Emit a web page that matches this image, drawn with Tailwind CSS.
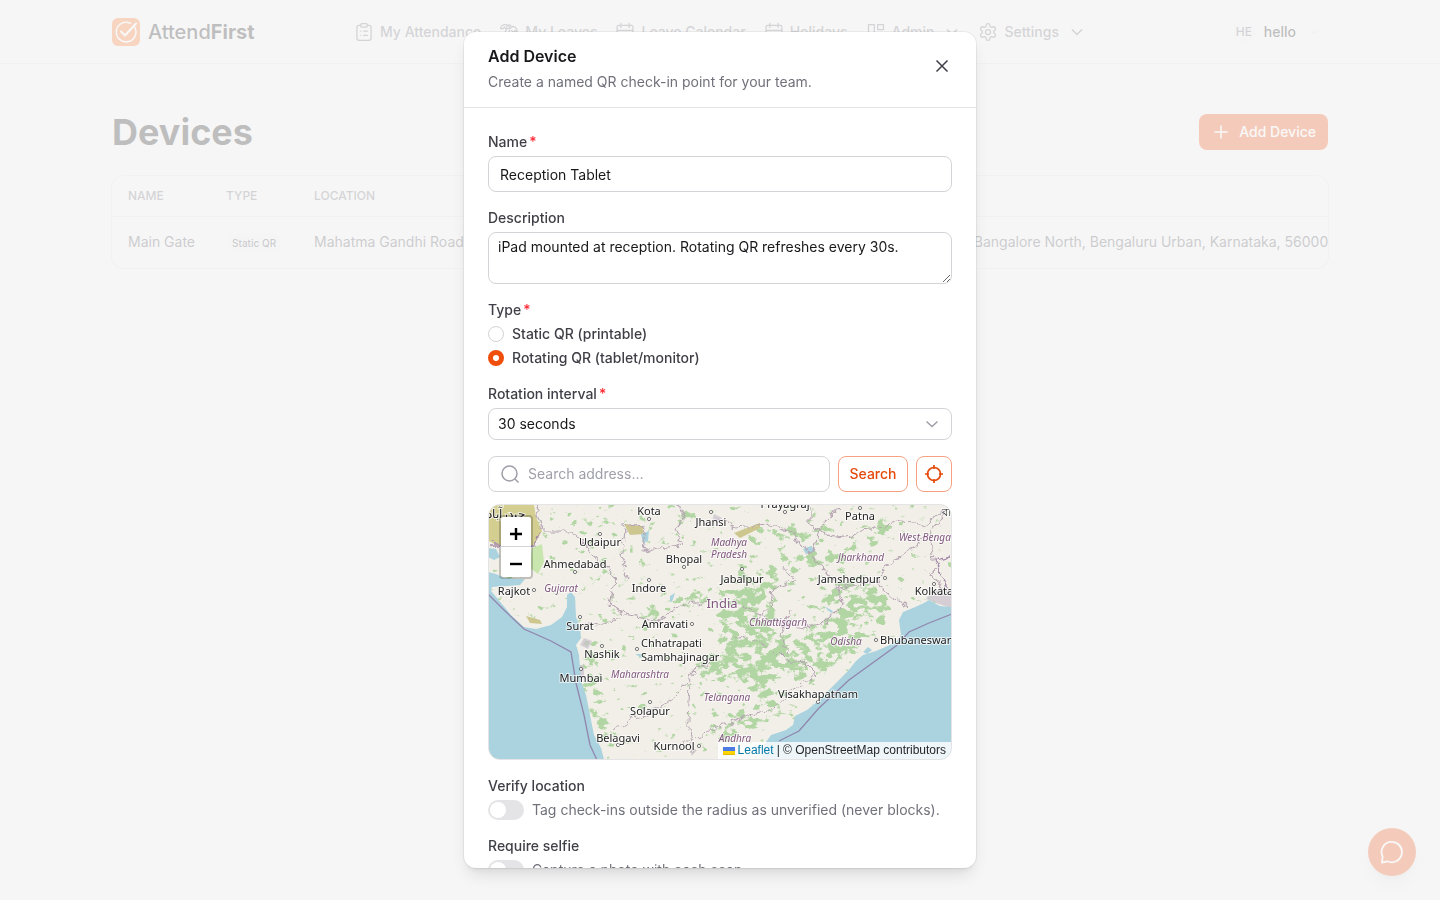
<!doctype html>
<html lang="en">
  <head>
    <meta charset="UTF-8" />
    <meta name="viewport" content="width=device-width, initial-scale=1.0" />
    <title>Devices - AttendFirst</title>
    <script src="https://cdn.jsdelivr.net/npm/@tailwindcss/browser@4"></script>
  </head>

  <body class="min-h-screen bg-[#f6f6f6] font-['Inter',sans-serif] text-sm text-zinc-900">
    <header class="h-16 border-b border-zinc-200">
      <div class="mx-auto flex h-full max-w-[1216px] items-center justify-between">
        <a href="#" class="flex w-[242px] items-center gap-2 text-xl font-medium">
          <svg class="size-7" viewBox="0 0 28 28" fill="none">
            <rect width="28" height="28" rx="6" fill="#f97326" />
            <path d="M22.6 9.2A9.8 9.8 0 1 1 18.500 5.300" stroke="#fff" stroke-width="1.500" stroke-linecap="round" />
            <path d="m9 13.500 4 4L24 5.500" stroke="#fff" stroke-width="2" stroke-linecap="round" stroke-linejoin="round" />
          </svg>
          <span>Attend<b class="font-bold">First</b></span>
        </a>
        <nav class="flex flex-1 items-center gap-4.5 font-medium whitespace-nowrap text-zinc-500">
          <a href="#" class="flex items-center gap-1.5">
            <svg class="size-5" viewBox="0 0 24 24" fill="none" stroke="currentColor" stroke-width="1.500" stroke-linecap="round" stroke-linejoin="round"><rect x="8" y="2" width="8" height="4" rx="1.500" /><path d="M16 4h2a2.500 2.500 0 0 1 2.500 2.500v13A2.500 2.500 0 0 1 18 22H6a2.500 2.500 0 0 1-2.500-2.500v-13A2.500 2.500 0 0 1 6 4h2M8 11h.1M8 16h.1M11.500 11H16M11.500 16H16" /></svg>
            My Attendance
          </a>
          <a href="#" class="flex items-center gap-1.5">
            <svg class="size-5" viewBox="0 0 24 24" fill="none" stroke="currentColor" stroke-width="1.500" stroke-linecap="round" stroke-linejoin="round"><path d="M13 8c0-2.800-2.500-5-5.500-5S2 5.200 2 8h3l1.500-2L8 8zM9 6c1-2 3-3 5-2M13 8c1.500-2.500 4-3 6-2s3 3.500 2.500 6L19 10l-1 3-3-3M9 8c-2 4-3 9-2 14h4c-1-5 0-10 2-12" /></svg>
            My Leaves
          </a>
          <a href="#" class="flex items-center gap-1.5">
            <svg class="size-5" viewBox="0 0 24 24" fill="none" stroke="currentColor" stroke-width="1.500" stroke-linecap="round" stroke-linejoin="round"><rect x="2.500" y="4" width="19" height="18" rx="2" /><path d="M7 1.500v5M17 1.500v5M2.500 10h19" /></svg>
            Leave Calendar
          </a>
          <a href="#" class="flex items-center gap-1.5">
            <svg class="size-5" viewBox="0 0 24 24" fill="none" stroke="currentColor" stroke-width="1.500" stroke-linecap="round" stroke-linejoin="round"><rect x="2.500" y="4" width="19" height="18" rx="2" /><path d="M7 1.500v5M17 1.500v5M2.500 10h19" /></svg>
            Holidays
          </a>
          <a href="#" class="flex items-center gap-1.5">
            <svg class="size-5" viewBox="0 0 24 24" fill="none" stroke="currentColor" stroke-width="1.500" stroke-linejoin="round"><path d="M3 3h7v11H3zM14 3h7v6h-7zM14 13h7v8h-7zM3 18h7v3H3z" /></svg>
            Admin
            <svg class="ml-1 size-4" viewBox="0 0 16 16" fill="none" stroke="currentColor" stroke-width="1.500"><path d="m3 5.500 5 5 5-5" /></svg>
          </a>
          <a href="#" class="flex items-center gap-1.5">
            <svg class="size-5" viewBox="0 0 24 24" fill="none" stroke="currentColor" stroke-width="1.500" stroke-linejoin="round"><path d="M12.220 2h-.44a2 2 0 0 0-2 2v.18a2 2 0 0 1-1 1.730l-.43.250a2 2 0 0 1-2 0l-.150-.08a2 2 0 0 0-2.730.73l-.220.380a2 2 0 0 0 .73 2.730l.150.1a2 2 0 0 1 1 1.720v.510a2 2 0 0 1-1 1.740l-.150.09a2 2 0 0 0-.73 2.730l.220.380a2 2 0 0 0 2.730.73l.150-.08a2 2 0 0 1 2 0l.43.250a2 2 0 0 1 1 1.730V20a2 2 0 0 0 2 2h.44a2 2 0 0 0 2-2v-.18a2 2 0 0 1 1-1.730l.43-.250a2 2 0 0 1 2 0l.150.08a2 2 0 0 0 2.730-.73l.220-.390a2 2 0 0 0-.73-2.730l-.150-.08a2 2 0 0 1-1-1.740v-.5a2 2 0 0 1 1-1.740l.150-.09a2 2 0 0 0 .73-2.730l-.220-.380a2 2 0 0 0-2.730-.73l-.150.08a2 2 0 0 1-2 0l-.43-.250a2 2 0 0 1-1-1.730V4a2 2 0 0 0-2-2z" /><circle cx="12" cy="12" r="3" /></svg>
            Settings
            <svg class="ml-1 size-4" viewBox="0 0 16 16" fill="none" stroke="currentColor" stroke-width="1.500"><path d="m3 5.500 5 5 5-5" /></svg>
          </a>
        </nav>
        <button type="button" class="flex items-center gap-2 pr-2 font-medium">
          <span class="flex size-6 items-center justify-center rounded-full bg-zinc-100 text-xs text-zinc-500">HE</span>
          hello
          <svg class="ml-1 size-3 text-zinc-300" viewBox="0 0 12 12" fill="none" stroke="currentColor"><path d="m3 4.500 3 3 3-3" /></svg>
        </button>
      </div>
    </header>

    <main class="mx-auto max-w-[1216px] pt-12">
      <div class="flex items-center justify-between">
        <h1 class="text-4xl font-bold">Devices</h1>
        <button type="button" class="flex h-9 items-center gap-2 rounded-lg bg-[#f04e0c] px-3 font-medium text-white">
          <svg class="size-5" viewBox="0 0 20 20" fill="none" stroke="currentColor" stroke-width="1.500"><path d="M10 3.500v13M3.500 10h13" /></svg>
          Add Device
        </button>
      </div>

      <div class="mt-6 overflow-hidden rounded-xl ring-1 ring-zinc-200">
        <table class="w-full table-fixed text-left whitespace-nowrap">
          <thead class="h-10 border-b border-zinc-200 text-xs text-zinc-500">
            <tr>
              <th class="w-[98px] pl-4 font-medium">NAME</th>
              <th class="w-[88px] pl-4 font-medium">TYPE</th>
              <th class="pl-4 font-medium">LOCATION</th>
            </tr>
          </thead>
          <tbody class="h-[52px] text-zinc-600">
            <tr>
              <td class="pl-4">Main Gate</td>
              <td class="pl-4"><span class="rounded-full bg-zinc-100 px-1.5 py-1 text-[10px] font-medium">Static QR</span></td>
              <td class="pl-4">Mahatma Gandhi Road, Shivaji Nagar, Ashok Nagar, Bengaluru Central City Corporation, Bengaluru, Bangalore North, Bengaluru Urban, Karnataka, 560001, India</td>
            </tr>
          </tbody>
        </table>
      </div>
    </main>

    <button type="button" aria-label="Open chat" class="fixed right-6 bottom-6 flex size-12 items-center justify-center rounded-full bg-[#f04e0c] text-white shadow-lg">
      <svg class="size-6" viewBox="0 0 24 24" fill="none" stroke="currentColor" stroke-width="1.800" stroke-linecap="round" stroke-linejoin="round"><path d="M2.600 16.500A10.200 10.200 0 1 1 7.500 21.300L2 22.500z" /></svg>
    </button>

    <!-- Backdrop and dialog -->
    <div class="fixed inset-0 flex items-center justify-center bg-[#f6f6f6]/75 py-8">
      <div role="dialog" aria-labelledby="dialogTitle" class="flex max-h-full w-full max-w-lg flex-col overflow-hidden rounded-xl bg-white shadow-lg ring-1 ring-black/5">
        <div class="flex shrink-0 items-start justify-between border-b border-zinc-200 px-6 pt-3 pb-[15px]">
          <div>
            <h2 id="dialogTitle" class="text-base font-semibold">Add Device</h2>
            <p class="mt-1 leading-5 text-zinc-500">Create a named QR check-in point for your team.</p>
          </div>
          <button type="button" aria-label="Close" class="mt-3 text-zinc-700">
            <svg class="size-5" viewBox="0 0 20 20" fill="none" stroke="currentColor" stroke-width="1.500"><path d="m4.500 4.500 11 11m0-11-11 11" /></svg>
          </button>
        </div>

        <form class="flex flex-col gap-4 overflow-y-auto p-6 [scrollbar-width:none]">
          <div class="flex shrink-0 flex-col gap-1">
            <label for="name" class="font-medium text-zinc-700">Name<span class="ml-0.5 text-red-500">*</span></label>
            <input id="name" type="text" value="Reception Tablet" class="h-9 w-full rounded-lg border border-zinc-300 px-[11px]" />
          </div>

          <div class="flex shrink-0 flex-col gap-1">
            <label for="description" class="font-medium text-zinc-700">Description</label>
            <textarea id="description" class="h-[52px] w-full resize rounded-lg border border-zinc-300 px-[9px] py-1 leading-5">iPad mounted at reception. Rotating QR refreshes every 30s.</textarea>
          </div>

          <fieldset class="flex shrink-0 flex-col gap-1 font-medium text-zinc-700">
            <legend class="mb-1">Type<span class="ml-0.5 text-red-500">*</span></legend>
            <label class="flex items-center gap-2">
              <input type="radio" name="type" class="size-4 appearance-none rounded-full border border-zinc-300 checked:border-5 checked:border-[#f04e0c]" />
              Static QR (printable)
            </label>
            <label class="flex items-center gap-2">
              <input type="radio" name="type" checked class="size-4 appearance-none rounded-full border border-zinc-300 checked:border-5 checked:border-[#f04e0c]" />
              Rotating QR (tablet/monitor)
            </label>
          </fieldset>

          <div class="flex shrink-0 flex-col gap-1">
            <label for="interval" class="font-medium text-zinc-700">Rotation interval<span class="ml-0.5 text-red-500">*</span></label>
            <div class="relative">
              <select id="interval" class="h-8 w-full appearance-none rounded-lg border border-zinc-300 px-[9px]">
                <option>30 seconds</option>
              </select>
              <svg class="pointer-events-none absolute top-2 right-3 size-4 text-zinc-400" viewBox="0 0 16 16" fill="none" stroke="currentColor" stroke-width="1.500"><path d="m2.500 5.500 5.500 5 5.500-5" /></svg>
            </div>
          </div>

          <div class="flex shrink-0 flex-col gap-3">
            <div class="flex gap-2">
              <label class="flex h-9 flex-1 items-center gap-2 rounded-lg border border-zinc-300 px-[11px]">
                <svg class="size-5 text-zinc-400" viewBox="0 0 20 20" fill="none" stroke="currentColor" stroke-width="1.500"><circle cx="9.500" cy="9.500" r="7.500" /><path d="m15 15 3.500 3.500" /></svg>
                <input type="text" aria-label="Search address" placeholder="Search address…" class="min-w-0 flex-1 outline-none placeholder:text-zinc-400" />
              </label>
              <button type="button" class="h-9 w-[70px] rounded-lg border border-[#f6a184] font-medium text-[#e54a0b]">Search</button>
              <button type="button" aria-label="Use my location" class="flex size-9 items-center justify-center rounded-lg border border-[#f6a184] text-[#e54a0b]">
                <svg class="size-5" viewBox="0 0 20 20" fill="none" stroke="currentColor" stroke-width="1.700"><circle cx="10" cy="10" r="6.500" /><path d="M10 1v4M10 15v4M1 10h4M15 10h4" /></svg>
              </button>
            </div>

            <div class="relative h-64 overflow-hidden rounded-xl border border-zinc-200 bg-[#f2efe9]">
              <svg class="h-full w-full" viewBox="1 1 462 254" preserveAspectRatio="xMidYMid slice">
                <defs>
                  <!-- Breaks a soft area up into small patches of wood -->
                  <filter id="patches" x="0" y="0" width="464" height="256" filterUnits="userSpaceOnUse" color-interpolation-filters="sRGB">
                    <feTurbulence type="fractalNoise" baseFrequency="0.1 0.14" numOctaves="5" seed="11" result="noise" />
                    <feGaussianBlur in="SourceGraphic" stdDeviation="5" result="density" />
                    <feComposite in="noise" in2="density" operator="arithmetic" k2="1" k3="1" k4="-0.76" />
                    <feColorMatrix values="0 0 0 0 0.7  0 0 0 0 0.84  0 0 0 0 0.64  0 0 0 11 0" />
                  </filter>
                  <filter id="jagged" x="0" y="0" width="464" height="256" filterUnits="userSpaceOnUse">
                    <feTurbulence type="fractalNoise" baseFrequency="0.12" numOctaves="3" seed="4" />
                    <feDisplacementMap in="SourceGraphic" scale="11" xChannelSelector="R" yChannelSelector="G" />
                  </filter>
                </defs>
                <g filter="url(#patches)">
                  <rect width="464" height="256" opacity="0.07" />
                  <path opacity="0.28" d="M232 95 270 80 290 110 285 190 300 200 278 215 262 190 230 160z" />
                  <path opacity="0.26" d="M285 140 330 120 380 125 370 150 335 170 300 180 280 165z" />
                  <path opacity="0.34" d="M290 50 350 48 362 62 300 62zM245 30 345 22 340 32 250 36z" />
                  <path opacity="0.26" d="M330 90 355 70 400 85 405 110 375 125 340 125z" />
                  <path opacity="0.2" d="M235 65 290 60 310 85 250 92z" />
                  <path opacity="0.26" d="M150 112 180 100 210 85 235 78 235 88 200 105 165 120z" />
                  <path opacity="0.26" d="M94 130 106 135 114 190 128 254 112 240 98 185z" />
                  <path opacity="0.24" d="M188 1 206 1 208 20 186 16zM90 20 120 1 125 4 100 40 130 70 120 75z" />
                  <path opacity="0.25" d="M205 160 240 150 240 180 210 175zM375 15 405 10 408 30 385 25z" />
                  <path opacity="0.24" d="M225 215 265 205 280 215 235 245zM355 35 400 25 400 35 360 45z" />
                </g>
                <path fill="#d4cf91" d="M1 1h45l2 12 6 14-8 14H8L1 37z" />
                <path fill="#c8e6ae" d="m44 44 10-4 2 18-6 12-8-6zM40 43l8 20-6 2z" />
                <path fill="#cdc78f" d="m136 20 18 2 2 8-14 1zM246 29l26-10v5l-20 10zM38 112l14 4 2 4-12-1z" />
                <path fill="#c9c2cc" d="m438 95 5-8 20-3v20l-12-4zM226 10l8 4-2 4-8-1zM96 134l8 3-4 8-8-4zM90 161h6v14l-4-4z" opacity=".7" />
                <!-- Arabian Sea and Bay of Bengal -->
                <g fill="#aad3df">
                  <path d="M0 68l8 2 8 4 13 1h8l-5 6-12 1-16 1-1 4 6 7 14 17 13 12 12 2 15-4 11-8 5-10V91l4-3 4 5 1 20 4 10 1 11-5 7 3 10 1 13 1 13 5 14 4 20 4 20 7 13 4 15H0z" />
                  <path d="M464 103l-12-1-11-6-5 3-11 5-10 4-4 8 1 8 1 6-3 6-8 5-14 6-13 4-7 6-8 10-10 10-10 10-10 10-11 9-12 6-2 9-7 5-15 5-5 7-6 18h193z" />
                  <path d="m0 44 8 1 4 8-6 3-6-3zM153 30l8-3-1 10-5 2zM315 45l8-3 4 5-9 3zM375 148l5-5 4 3-5 4zM147 150h7v4zM336 102l9 5-2 2zM182 92l5-3-3 9-2-1z" />
                </g>
                <!-- State borders -->
                <g filter="url(#jagged)" fill="none" stroke="#b6a6b3">
                  <path d="M48 1l7 26h29l14 13 15 21 15 12-6 28 12 8 38 8 15-14 32-6M141 76l-8-24 5-24-4-8 16-2 7 10-2 20 15-4 23-3-4-18 8-10-10-16" stroke-width="1.200" />
                  <path d="M228 14l20 9 32-3 26 8 6 14 12 7 8-27 20-19M322 1v20l25 12 18-2 24-8 20-6 26 5 20-14 8-12M324 54l26 28 5 18-20 20-20 4-30-6-30-16M350 84l38-6 16 14 15 10M436 34l-22 18-14 8-10 18M457 10l-15 20 5 32-4 8 14 16" stroke-width="1.200" />
                  <path d="M295 62l12 14-22 8-2 16-18 20M285 144l12 12 20 2 12 12-25 18-23 18-30 9-30 12-28 15M302 106l-8 26 6 18M126 226l18-12 18-6 22-12 15-18 10-16 14-4M202 180l-2 36 4 34M92 120l20 2 20-8M242 135l14-2 24 10" />
                </g>
                <path filter="url(#jagged)" d="M462 52l-14 4 8 22 6 12M1 41h44l6-10" fill="none" stroke="#a78bab" stroke-width="1.500" />
                <path d="M0 90l16 16 20 19 27 12 20 11 5 31 8 32 6 30 7 15M464 110l-23 9-20 9-13 14-47 34-30 28-20 23-20 10" fill="none" stroke="#9186ad" stroke-width="1.300" />
                <g fill="#fff" stroke="#555" stroke-width=".8">
                  <circle cx="161" cy="15" r="1.600" /><circle cx="112" cy="30" r="1.600" /><circle cx="223" cy="8" r="1.600" /><circle cx="87" cy="68" r="1.600" />
                  <circle cx="196" cy="63" r="1.600" /><circle cx="161" cy="76" r="1.600" /><circle cx="46" cy="86" r="1.600" /><circle cx="92" cy="113" r="1.600" />
                  <circle cx="204" cy="120" r="1.600" /><circle cx="297" cy="8" r="1.600" /><circle cx="372" cy="4" r="1.600" /><circle cx="254" cy="65" r="1.600" />
                  <circle cx="397" cy="74" r="1.600" /><circle cx="446" cy="80" r="1.600" /><circle cx="114" cy="142" r="1.600" /><circle cx="149" cy="145" r="1.600" />
                  <circle cx="93" cy="165" r="1.600" /><circle cx="162" cy="198" r="1.600" /><circle cx="130" cy="241" r="1.600" /><circle cx="211" cy="242" r="1.600" />
                  <circle cx="388" cy="136" r="1.600" /><circle cx="330" cy="198" r="1.600" />
                </g>
                <g class="fill-[#222] stroke-white/70 stroke-2 font-['Noto_Sans',sans-serif] text-[11px]" paint-order="stroke" text-anchor="middle">
                  <text x="18" y="14" class="text-[12px]">حيدرآباد</text>
                  <text x="161" y="11">Kota</text>
                  <text x="223" y="22">Jhansi</text>
                  <text x="297" y="4">Prayagraj</text>
                  <text x="372" y="16">Patna</text>
                  <text x="458" y="12">বা</text>
                  <text x="112" y="42">Udaipur</text>
                  <text x="87" y="64">Ahmedabad</text>
                  <text x="196" y="59">Bhopal</text>
                  <text x="254" y="79">Jabalpur</text>
                  <text x="361" y="79">Jamshedpur</text>
                  <text x="161" y="88">Indore</text>
                  <text x="26" y="91">Rajkot</text>
                  <text x="446" y="91">Kolkata</text>
                  <text x="92" y="126">Surat</text>
                  <text x="177" y="124">Amravati</text>
                  <text x="114" y="154">Nashik</text>
                  <text x="153" y="143" text-anchor="start">Chhatrapati</text>
                  <text x="153" y="157" text-anchor="start">Sambhajinagar</text>
                  <text x="392" y="140" text-anchor="start">Bhubaneswar</text>
                  <text x="93" y="178">Mumbai</text>
                  <text x="330" y="194">Visakhapatnam</text>
                  <text x="162" y="211">Solapur</text>
                  <text x="130" y="238">Belagavi</text>
                  <text x="186" y="246">Kurnool</text>
                </g>
                <g class="fill-[#80577f] stroke-white/60 stroke-2 font-['Noto_Sans',sans-serif] text-[10px] italic" paint-order="stroke" text-anchor="middle">
                  <text x="241" y="42">Madhya</text>
                  <text x="241" y="54">Pradesh</text>
                  <text x="373" y="57">Jharkhand</text>
                  <text x="411" y="37" text-anchor="start">West Bengal</text>
                  <text x="73" y="88">Gujarat</text>
                  <text x="290" y="122">Chhattisgarh</text>
                  <text x="358" y="141">Odisha</text>
                  <text x="152" y="174">Maharashtra</text>
                  <text x="239" y="197">Telangana</text>
                  <text x="247" y="238">Andhra</text>
                  <text x="234" y="104" class="text-[13px] not-italic">India</text>
                </g>
              </svg>
              <div class="absolute top-2.5 left-2.5 flex flex-col rounded border-2 border-black/20 bg-white bg-clip-padding text-black">
                <button type="button" aria-label="Zoom in" class="flex size-[30px] items-center justify-center border-b border-zinc-300 pt-1">
                  <svg class="size-3.5" viewBox="0 0 14 14" stroke="currentColor" stroke-width="2.400"><path d="M7 1v12M1 7h12" /></svg>
                </button>
                <button type="button" aria-label="Zoom out" class="flex size-[30px] items-center justify-center pt-1">
                  <svg class="size-3.5" viewBox="0 0 14 14" stroke="currentColor" stroke-width="2.400"><path d="M1 7h12" /></svg>
                </button>
              </div>
              <div class="absolute right-0 bottom-0 flex items-center gap-[3px] bg-white/80 px-[5px] font-['Liberation_Sans',sans-serif] text-xs leading-[17px] text-zinc-800">
                <svg class="h-2 w-3" viewBox="0 0 12 8"><path fill="#4c7be1" d="M0 0h12v4H0z" /><path fill="#ffd500" d="M0 4h12v3H0z" /><path fill="#e0bc00" d="M0 7h12v1H0z" /></svg>
                <a href="#" class="text-[#0078a8]">Leaflet</a>
                <span>| © OpenStreetMap contributors</span>
              </div>
            </div>
          </div>

          <div class="flex shrink-0 flex-col gap-1">
            <label for="verify" class="font-medium text-zinc-700">Verify location</label>
            <div class="flex items-center gap-2 text-zinc-500">
              <input id="verify" type="checkbox" class="h-5 w-9 appearance-none rounded-full bg-zinc-200 p-0.5 before:block before:size-4 before:rounded-full before:bg-white checked:bg-[#f04e0c] checked:before:ml-4" />
              <span>Tag check-ins outside the radius as unverified (never blocks).</span>
            </div>
          </div>

          <div class="flex shrink-0 flex-col gap-1">
            <label for="selfie" class="font-medium text-zinc-700">Require selfie</label>
            <div class="flex items-center gap-2 text-zinc-500">
              <input id="selfie" type="checkbox" class="h-5 w-9 appearance-none rounded-full bg-zinc-200 p-0.5 before:block before:size-4 before:rounded-full before:bg-white checked:bg-[#f04e0c] checked:before:ml-4" />
              <span>Capture a photo with each scan.</span>
            </div>
          </div>
        </form>
      </div>
    </div>
  </body>
</html>
